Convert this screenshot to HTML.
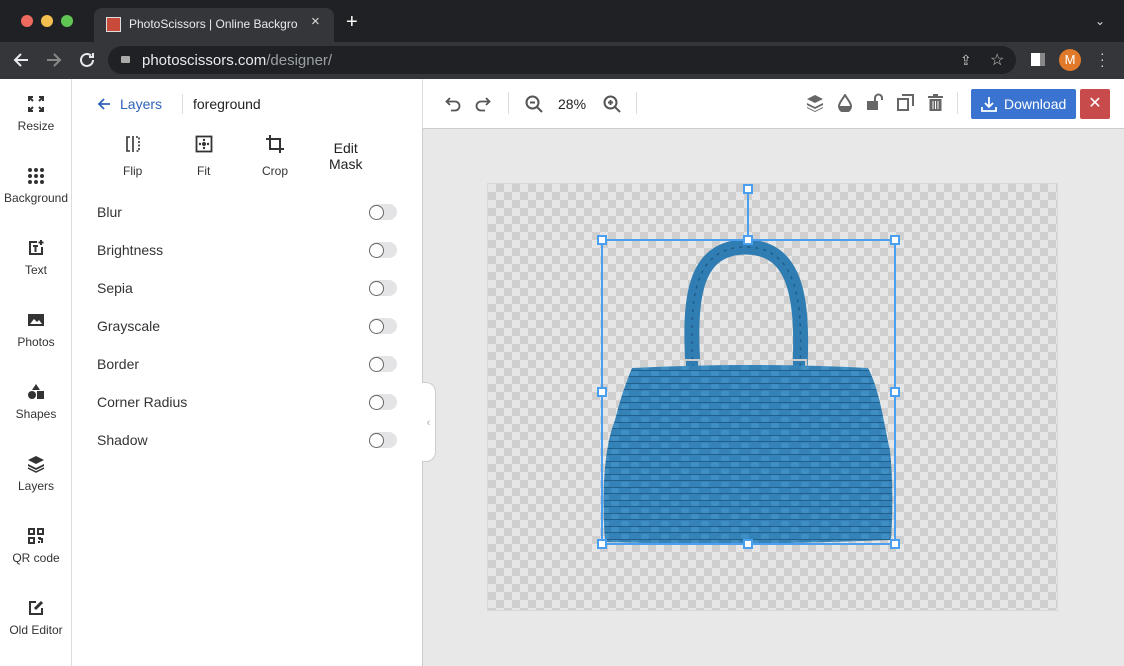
<!DOCTYPE html>
<html><head><meta charset="utf-8"><style>
*{box-sizing:border-box;margin:0;padding:0}
body{width:1124px;height:666px;overflow:hidden;font-family:"Liberation Sans",sans-serif;background:#fff;position:relative}
.abs{position:absolute}
.tabbar{left:0;top:0;width:1124px;height:42px;background:#202124}
.tool{left:0;top:42px;width:1124px;height:37px;background:#35363a}
.side{left:0;top:79px;width:72px;height:587px;border-right:1px solid #ddd;background:#fff}
.si{position:absolute;left:0;width:72px;text-align:center;font-size:12px;color:#333}
.si svg{display:block;margin:0 auto 6px}
.panel{left:73px;top:79px;width:349px;height:587px;background:#fff}
.row{position:absolute;left:24px;font-size:14px;color:#333}
.tog{position:absolute;left:296px;width:28px;height:16px;border-radius:8px;background:#e4e4e6}
.tog:before{content:"";position:absolute;left:0;top:1px;width:13px;height:13px;border-radius:50%;border:1px solid #666;background:#fff}
.canvas{left:422px;top:129px;width:702px;height:537px;background:#e8e8e8;border-left:1px solid #ccc}
.ctool{left:422px;top:79px;width:702px;height:50px;background:#fff;border-bottom:1px solid #ccc;border-left:1px solid #ddd}
.h{position:absolute;width:10px;height:10px;background:#fff;border:2px solid #4a9ff0}
</style></head><body>
<div class="abs tabbar"></div>
<div class="abs" style="left:21px;top:15px;width:12px;height:12px;border-radius:50%;background:#ed6a5e"></div>
<div class="abs" style="left:41px;top:15px;width:12px;height:12px;border-radius:50%;background:#f4bf4f"></div>
<div class="abs" style="left:61px;top:15px;width:12px;height:12px;border-radius:50%;background:#61c554"></div>
<div class="abs" style="left:94px;top:8px;width:240px;height:34px;background:#35363a;border-radius:8px 8px 0 0"></div>
<div class="abs" style="left:106px;top:17px;width:15px;height:15px;background:#c84a3a;border:1px solid #ddd"></div>
<div class="abs" style="left:129px;top:17px;font-size:12px;color:#e8eaed;width:180px;white-space:nowrap;overflow:hidden">PhotoScissors | Online Backgro</div>
<div class="abs" style="left:311px;top:13px;font-size:15px;color:#ddd">×</div>
<div class="abs" style="left:346px;top:11px;font-size:20px;color:#fff">+</div>
<div class="abs" style="left:1095px;top:14px;font-size:12px;color:#ddd">⌄</div>
<div class="abs tool"></div>
<svg class="abs" style="left:13px;top:52px" width="16" height="16" viewBox="0 0 16 16" fill="none" stroke="#e8eaed" stroke-width="2"><path d="M15 8H2M8 2L2 8l6 6"/></svg>
<svg class="abs" style="left:46px;top:52px" width="16" height="16" viewBox="0 0 16 16" fill="none" stroke="#888" stroke-width="2"><path d="M1 8h13M8 2l6 6-6 6"/></svg>
<svg class="abs" style="left:79px;top:52px" width="16" height="16" viewBox="0 0 16 16" fill="none" stroke="#e8eaed" stroke-width="2"><path d="M14 8a6 6 0 11-2-4.5"/><path d="M14 1v4h-4" /></svg>
<div class="abs" style="left:108px;top:46px;width:908px;height:28px;border-radius:14px;background:#202124"></div>
<div class="abs" style="left:121px;top:56px;width:9px;height:7px;background:#aaa;border-radius:1px"></div>
<div class="abs" style="left:142px;top:52px;font-size:15px;color:#e8eaed">photoscissors.com<span style="color:#9aa0a6">/designer/</span></div>
<div class="abs" style="left:960px;top:52px;font-size:14px;color:#ccc">⇪</div>
<div class="abs" style="left:990px;top:50px;font-size:16px;color:#ccc">☆</div>
<div class="abs" style="left:1031px;top:53px;width:14px;height:13px;background:#fff;border-right:5px solid #888"></div>
<div class="abs" style="left:1059px;top:49px;width:22px;height:22px;border-radius:50%;background:#e07a2a;color:#fff;font-size:13px;text-align:center;line-height:22px">M</div>
<div class="abs" style="left:1100px;top:50px;font-size:14px;color:#ddd;line-height:6px">·<br>·<br>·</div>

<div class="abs side">
<div class="si" style="top:16px"><svg width="18" height="18" viewBox="0 0 18 18" fill="none" stroke="#333" stroke-width="2"><path d="M2 6V2h4M12 2h4v4M16 12v4h-4M6 16H2v-4M2 2l4 4M16 2l-4 4M16 16l-4-4M2 16l4-4"/></svg>Resize</div>
<div class="si" style="top:88px"><svg width="18" height="18" viewBox="0 0 18 18" fill="#333"><circle cx="3" cy="3" r="2"/><circle cx="9" cy="3" r="2"/><circle cx="15" cy="3" r="2"/><circle cx="3" cy="9" r="2"/><circle cx="9" cy="9" r="2"/><circle cx="15" cy="9" r="2"/><circle cx="3" cy="15" r="2"/><circle cx="9" cy="15" r="2"/><circle cx="15" cy="15" r="2"/></svg>Background</div>
<div class="si" style="top:160px"><svg width="18" height="18" viewBox="0 0 18 18" fill="none" stroke="#333" stroke-width="2"><path d="M10 3H3v12h12V8M6 7h5M8.5 7v6M14 1v5M11.5 3.5h5"/></svg>Text</div>
<div class="si" style="top:232px"><svg width="18" height="18" viewBox="0 0 18 18"><rect x="1" y="3" width="16" height="12" fill="#333"/><path d="M3 13l4-5 3 3 2-2 3 4z" fill="#fff"/></svg>Photos</div>
<div class="si" style="top:304px"><svg width="18" height="18" viewBox="0 0 18 18" fill="#333"><path d="M9 1l4 6H5z"/><circle cx="5" cy="12" r="4"/><rect x="10" y="8" width="7" height="8"/></svg>Shapes</div>
<div class="si" style="top:376px"><svg width="18" height="18" viewBox="0 0 18 18" fill="#333"><path d="M9 1l8 4-8 4-8-4z"/><path d="M1 9l8 4 8-4v2l-8 4-8-4z"/><path d="M1 13l8 4 8-4" stroke="#333" stroke-width="1.5" fill="none"/></svg>Layers</div>
<div class="si" style="top:448px"><svg width="18" height="18" viewBox="0 0 18 18" fill="none" stroke="#333" stroke-width="2"><rect x="2" y="2" width="5" height="5"/><rect x="11" y="2" width="5" height="5"/><rect x="2" y="11" width="5" height="5"/><path d="M11 11h2v2M15 11v5M11 15h2"/></svg>QR code</div>
<div class="si" style="top:520px"><svg width="18" height="18" viewBox="0 0 18 18" fill="none" stroke="#333" stroke-width="2"><path d="M9 3H3v12h12V9"/><path d="M8 10l7-7" stroke-width="3"/></svg>Old Editor</div>
</div>

<div class="abs panel">
<svg class="abs" style="left:24px;top:18px" width="14" height="14" viewBox="0 0 14 14" fill="none" stroke="#2e63b8" stroke-width="1.8"><path d="M13 7H2M7 2L2 7l5 5"/></svg>
<div class="abs" style="left:47px;top:17px;font-size:14px;color:#2e63b8">Layers</div>
<div class="abs" style="left:109px;top:15px;width:1px;height:20px;background:#ddd"></div>
<div class="abs" style="left:120px;top:17px;font-size:14px;color:#222">foreground</div>
<svg class="abs" style="left:51px;top:56px" width="18" height="18" viewBox="0 0 18 18" fill="none" stroke="#333" stroke-width="1.6"><path d="M6 2H3v14h3M9 1v16"/><path d="M12 2h3v14h-3" stroke-dasharray="2 1.5"/></svg>
<div class="abs" style="left:50px;top:85px;font-size:12px;color:#333">Flip</div>
<svg class="abs" style="left:122px;top:56px" width="18" height="18" viewBox="0 0 18 18"><rect x="1.5" y="1.5" width="15" height="15" fill="none" stroke="#333" stroke-width="1.8"/><circle cx="9" cy="9" r="2" fill="#333"/><circle cx="9" cy="5" r="1.2" fill="#333"/><circle cx="9" cy="13" r="1.2" fill="#333"/><circle cx="5" cy="9" r="1.2" fill="#333"/><circle cx="13" cy="9" r="1.2" fill="#333"/></svg>
<div class="abs" style="left:124px;top:85px;font-size:12px;color:#333">Fit</div>
<svg class="abs" style="left:192px;top:55px" width="20" height="20" viewBox="0 0 20 20" fill="none" stroke="#333" stroke-width="2"><path d="M5 1v14h14M1 5h14v14"/></svg>
<div class="abs" style="left:189px;top:85px;font-size:12px;color:#333">Crop</div>
<div class="abs" style="left:256px;top:61px;font-size:14px;color:#222;text-align:center;line-height:16px">Edit<br>Mask</div>
<div class="row" style="top:125px">Blur</div><div class="tog" style="top:125px"></div>
<div class="row" style="top:163px">Brightness</div><div class="tog" style="top:163px"></div>
<div class="row" style="top:201px">Sepia</div><div class="tog" style="top:201px"></div>
<div class="row" style="top:239px">Grayscale</div><div class="tog" style="top:239px"></div>
<div class="row" style="top:277px">Border</div><div class="tog" style="top:277px"></div>
<div class="row" style="top:315px">Corner Radius</div><div class="tog" style="top:315px"></div>
<div class="row" style="top:353px">Shadow</div><div class="tog" style="top:353px"></div>
</div>

<div class="abs ctool">
<svg class="abs" style="left:22px;top:17px" width="16" height="16" viewBox="0 0 16 16" fill="none" stroke="#555" stroke-width="1.8"><path d="M5 2L1.5 5.5 5 9"/><path d="M2 5.5h8a4.5 4.5 0 010 9H6"/></svg>
<svg class="abs" style="left:52px;top:17px" width="16" height="16" viewBox="0 0 16 16" fill="none" stroke="#555" stroke-width="1.8"><path d="M11 2l3.5 3.5L11 9"/><path d="M14 5.5H6a4.5 4.5 0 000 9h4"/></svg>
<div class="abs" style="left:85px;top:13px;width:1px;height:22px;background:#ddd"></div>
<svg class="abs" style="left:102px;top:16px" width="18" height="18" viewBox="0 0 18 18" fill="none" stroke="#555" stroke-width="2"><circle cx="7.5" cy="7.5" r="6"/><path d="M12 12l5 5M5 7.5h5"/></svg>
<div class="abs" style="left:135px;top:17px;font-size:14px;color:#222">28%</div>
<svg class="abs" style="left:180px;top:16px" width="18" height="18" viewBox="0 0 18 18" fill="none" stroke="#555" stroke-width="2"><circle cx="7.5" cy="7.5" r="6"/><path d="M12 12l5 5M5 7.5h5M7.5 5v5"/></svg>
<div class="abs" style="left:213px;top:13px;width:1px;height:22px;background:#ddd"></div>
<svg class="abs" style="left:384px;top:16px" width="16" height="17" viewBox="0 0 16 17" fill="#666"><path d="M8 0l8 4-8 4-8-4z"/><path d="M0 8l8 4 8-4v2l-8 4-8-4z"/><path d="M0 12l8 4 8-4v1l-8 4-8-4z"/></svg>
<svg class="abs" style="left:415px;top:15px" width="14" height="18" viewBox="0 0 14 18"><path d="M7 1C4 6 1 9 1 12a6 6 0 0012 0c0-3-3-6-6-11z" fill="none" stroke="#666" stroke-width="2"/><path d="M1 12a6 6 0 0012 0z" fill="#666"/></svg>
<svg class="abs" style="left:443px;top:14px" width="18" height="18" viewBox="0 0 18 18"><rect x="1" y="8" width="11" height="9" fill="#666"/><path d="M9 8V5a3.5 3.5 0 017 0v2" fill="none" stroke="#666" stroke-width="2"/></svg>
<svg class="abs" style="left:474px;top:15px" width="17" height="17" viewBox="0 0 17 17" fill="none" stroke="#666" stroke-width="2"><rect x="1" y="5" width="10" height="11"/><path d="M5 1h11v11"/></svg>
<svg class="abs" style="left:505px;top:15px" width="15" height="17" viewBox="0 0 15 17" fill="#666"><rect x="0" y="2" width="15" height="2"/><rect x="5" y="0" width="5" height="2"/><path d="M1.5 5h12v12h-12z"/><path d="M5 7v8M7.5 7v8M10 7v8" stroke="#fff" stroke-width="1"/></svg>
<div class="abs" style="left:534px;top:13px;width:1px;height:22px;background:#ddd"></div>
<div class="abs" style="left:548px;top:10px;width:105px;height:30px;background:#3a74d0;border-radius:2px;color:#fff;font-size:14px;line-height:30px;padding-left:33px">Download</div>
<svg class="abs" style="left:558px;top:17px" width="16" height="16" viewBox="0 0 16 16" fill="none" stroke="#fff" stroke-width="1.8"><path d="M8 1v10M4 7l4 4 4-4M1 11v4h14v-4"/></svg>
<div class="abs" style="left:657px;top:10px;width:30px;height:30px;background:#c84b4b;border-radius:2px;color:#fff;font-size:16px;line-height:30px;text-align:center">✕</div>
</div>

<div class="abs canvas"></div>
<div class="abs" style="left:422px;top:382px;width:14px;height:80px;background:#fff;border:1px solid #ccc;border-left:none;border-radius:0 10px 10px 0;color:#aaa;font-size:11px;line-height:80px;text-align:center">‹</div>
<div class="abs" style="left:487px;top:183px;width:571px;height:428px;border:1px solid #d8d8d8;background-color:#e6e6e6;background-image:linear-gradient(45deg,#cfcfcf 25%,transparent 25%,transparent 75%,#cfcfcf 75%),linear-gradient(45deg,#cfcfcf 25%,transparent 25%,transparent 75%,#cfcfcf 75%);background-size:16px 16px;background-position:0 0,8px 8px"></div>

<svg class="abs" style="left:0;top:0" width="1124" height="666">
<defs><pattern id="sc" width="20" height="13" patternUnits="userSpaceOnUse"><rect width="20" height="13" fill="#3582b8"/><rect x="1" y="1" width="8" height="5" rx="2" fill="#3f8fc4"/><rect x="11" y="7" width="8" height="5" rx="2" fill="#3f8fc4"/><path d="M0 12.5h20M0 6.5h20" stroke="#215f8d" stroke-width="1"/></pattern></defs>
<path d="M693 368 C689 300 693 248 745 247 C797 247 803 300 800 368" fill="none" stroke="#2f7db2" stroke-width="15"/>
<path d="M693 368 C689 300 693 248 745 247 C797 247 803 300 800 368" fill="none" stroke="#1f5d8b" stroke-width="1.5" stroke-dasharray="3 5"/>
<rect x="685" y="360" width="14" height="10" fill="none" stroke="#ccc" stroke-width="2"/>
<rect x="792" y="360" width="14" height="10" fill="none" stroke="#ccc" stroke-width="2"/>
<path d="M632 368 Q750 362 868 368 C880 390 885 430 890 450 C893 480 893 510 891 540 Q750 546 605 542 C602 500 603 450 615 420 C620 400 625 385 632 368Z" fill="url(#sc)"/>
<rect x="602" y="240" width="293" height="304" fill="none" stroke="#4a9ff0" stroke-width="2"/>
<line x1="748" y1="190" x2="748" y2="240" stroke="#4a9ff0" stroke-width="2"/>
</svg>
<div class="h" style="left:743px;top:184px"></div>
<div class="h" style="left:597px;top:235px"></div><div class="h" style="left:743px;top:235px"></div><div class="h" style="left:890px;top:235px"></div>
<div class="h" style="left:597px;top:387px"></div><div class="h" style="left:890px;top:387px"></div>
<div class="h" style="left:597px;top:539px"></div><div class="h" style="left:743px;top:539px"></div><div class="h" style="left:890px;top:539px"></div>
</body></html>
